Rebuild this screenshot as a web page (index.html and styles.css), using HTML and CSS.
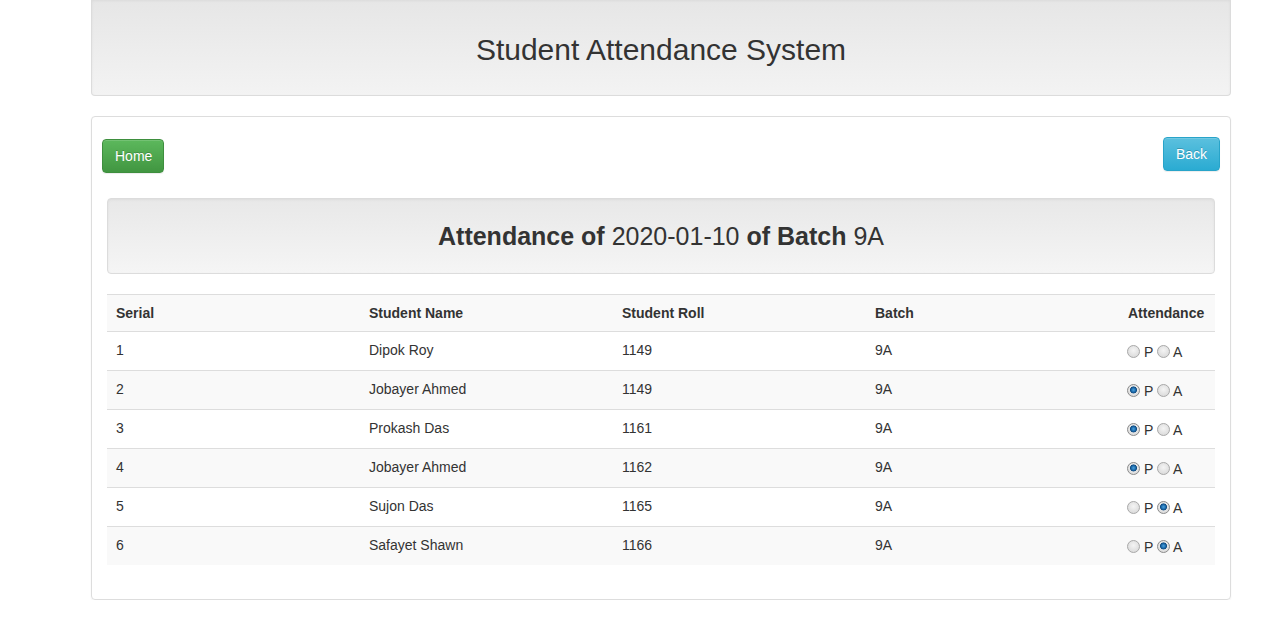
FILE: index.html
```html
<!DOCTYPE html>
<html>
<head>
<meta charset="utf-8">
<title>Student Attendance System</title>
<link rel="stylesheet" href="styles.css">
</head>
<body>
<div class="container">
  <div class="site-header">
    <h2 class="site-title">Student Attendance System</h2>
  </div>
  <div class="panel">
    <div class="toolbar">
      <a class="btn btn-success btn-home" href="#">Home</a>
      <a class="btn btn-info" href="#">Back</a>
    </div>
    <div class="content">
      <div class="well">
        <h3 class="well-title"><b>Attendance of</b> 2020-01-10 <b>of Batch</b> 9A</h3>
      </div>
      <table class="table">
        <colgroup>
          <col class="c1"><col class="c2"><col class="c3"><col class="c4"><col class="c5">
        </colgroup>
        <tbody>
          <tr class="head"><th>Serial</th><th>Student Name</th><th>Student Roll</th><th>Batch</th><th>Attendance</th></tr>
          <tr><td>1</td><td>Dipok Roy</td><td>1149</td><td>9A</td><td class="att"><input type="radio" name="a1"> P <input type="radio" name="a1"> A</td></tr>
          <tr><td>2</td><td>Jobayer Ahmed</td><td>1149</td><td>9A</td><td class="att"><input type="radio" name="a2" checked> P <input type="radio" name="a2"> A</td></tr>
          <tr><td>3</td><td>Prokash Das</td><td>1161</td><td>9A</td><td class="att"><input type="radio" name="a3" checked> P <input type="radio" name="a3"> A</td></tr>
          <tr><td>4</td><td>Jobayer Ahmed</td><td>1162</td><td>9A</td><td class="att"><input type="radio" name="a4" checked> P <input type="radio" name="a4"> A</td></tr>
          <tr><td>5</td><td>Sujon Das</td><td>1165</td><td>9A</td><td class="att"><input type="radio" name="a5"> P <input type="radio" name="a5" checked> A</td></tr>
          <tr><td>6</td><td>Safayet Shawn</td><td>1166</td><td>9A</td><td class="att"><input type="radio" name="a6"> P <input type="radio" name="a6" checked> A</td></tr>
        </tbody>
      </table>
    </div>
  </div>
</div>
</body>
</html>
```
FILE: styles.css
```css
* { box-sizing: border-box; }
html, body { margin: 0; padding: 0; background: #fff; }
body {
  font-family: "Liberation Sans", Arial, Helvetica, sans-serif;
  font-size: 14px;
  line-height: 20px;
  color: #333;
}
.container {
  width: 1140px;
  margin-left: 91px;
}
.site-header {
  height: 96px;
  padding: 33px 0 0;
  border: 1px solid #dcdcdc;
  border-top: 0;
  border-radius: 0 0 4px 4px;
  background: linear-gradient(to bottom, #e6e6e6 0, #f3f3f3 100%);
  box-shadow: inset 0 1px 3px rgba(0,0,0,.05);
  text-align: center;
}
.site-title {
  margin: 0;
  font-size: 30px;
  line-height: 33px;
  font-weight: 400;
  color: #333;
}
.panel {
  margin-top: 20px;
  border: 1px solid #ddd;
  border-radius: 4px;
  padding: 20px 10px 34px;
  box-shadow: 0 1px 2px rgba(0,0,0,.05);
}
.toolbar {
  display: flex;
  justify-content: space-between;
  align-items: flex-start;
}
.btn {
  display: inline-block;
  padding: 6px 12px;
  font-size: 14px;
  line-height: 20px;
  color: #fff;
  text-decoration: none;
  border: 1px solid transparent;
  border-radius: 4px;
  text-shadow: 0 -1px 0 rgba(0,0,0,.2);
  box-shadow: inset 0 1px 0 rgba(255,255,255,.15), 0 1px 1px rgba(0,0,0,.075);
}
.btn-success {
  background: linear-gradient(to bottom, #5cb85c 0, #419641 100%);
  border-color: #3e8f3e;
}
.btn-info {
  background: linear-gradient(to bottom, #5bc0de 0, #2aabd2 100%);
  border-color: #28a4c9;
}
.btn-home { margin-top: 2px; padding-right: 11px; }
.content { padding: 0 5px; }
.well {
  margin-top: 25px;
  height: 76px;
  border: 1px solid #dcdcdc;
  border-radius: 4px;
  background: linear-gradient(to bottom, #e8e8e8 0, #f5f5f5 100%);
  box-shadow: inset 0 1px 3px rgba(0,0,0,.05), 0 1px 0 rgba(255,255,255,.1);
  display: flex;
  align-items: center;
  justify-content: center;
}
.well-title {
  margin: 0;
  font-size: 25px;
  line-height: 27px;
  font-weight: 400;
  color: #333;
}
.well-title b { font-weight: 700; }
.table {
  margin-top: 20px;
  width: 100%;
  border-collapse: collapse;
  border-spacing: 0;
  table-layout: fixed;
}
.c1 { width: 253px; }
.c2 { width: 253px; }
.c3 { width: 253px; }
.c4 { width: 253px; }
.table th, .table td {
  text-align: left;
  border-top: 1px solid #ddd;
  vertical-align: top;
  white-space: nowrap;
}
.table th {
  padding: 8px 8px 8px 9px;
  font-weight: 700;
}
.table td {
  padding: 8px 8px 10px 9px;
}
.table td.att {
  padding: 10px 8px 8px 8px;
}
.table tr:nth-of-type(odd) { background: #f9f9f9; }
.att input[type=radio] {
  -webkit-appearance: none;
  appearance: none;
  width: 13px;
  height: 13px;
  margin: 0;
  vertical-align: -1px;
  border-radius: 50%;
  border: 1px solid #a9a9a9;
  background: radial-gradient(circle at 50% 40%, #f4f4f4 0, #dedede 70%, #cfcfcf 100%);
}
.att input[type=radio]:checked {
  background:
    radial-gradient(circle at 50% 45%, #4fa3dd 0, #1f6fb0 2px, #0f4a80 3.2px, transparent 3.8px),
    radial-gradient(circle at 50% 40%, #f4f4f4 0, #dedede 70%, #cfcfcf 100%);
  border-color: #8c8c8c;
}
```
